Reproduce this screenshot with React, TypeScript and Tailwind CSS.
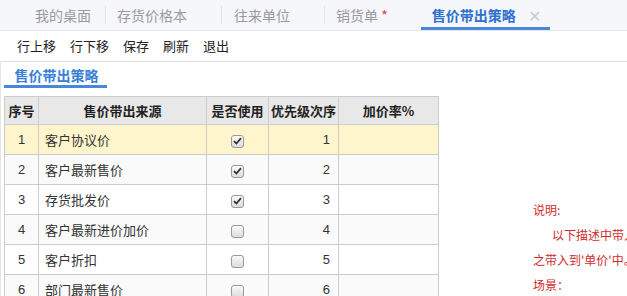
import React from "react";

const rows = [
  { n: 1, name: "客户协议价", used: true, pri: 1 },
  { n: 2, name: "客户最新售价", used: true, pri: 2 },
  { n: 3, name: "存货批发价", used: true, pri: 3 },
  { n: 4, name: "客户最新进价加价", used: false, pri: 4 },
  { n: 5, name: "客户折扣", used: false, pri: 5 },
  { n: 6, name: "部门最新售价", used: false, pri: 6 },
];

function Box({ checked }: { checked: boolean }) {
  return (
    <span className="inline-flex h-[13px] w-[13px] items-center justify-center rounded-[3px] border border-[#9a9a9a] bg-gradient-to-b from-[#fafafa] to-[#dcdcdc]">
      {checked && (
        <svg width="9" height="8" viewBox="0 0 9 8">
          <path d="M1 4.2 L3.4 6.5 L8 1.2" stroke="#333" strokeWidth="1.8" fill="none" />
        </svg>
      )}
    </span>
  );
}

export default function App() {
  const font = { fontFamily: '"Noto Sans CJK SC", "Noto Sans", sans-serif' };
  const num = { fontFamily: '"Liberation Sans", Arial, sans-serif' };
  return (
    <div className="h-[296px] w-[627px] overflow-hidden bg-white text-[#333]" style={font}>
      <div className="flex h-[31px] items-center border-b border-[#e4e7ec] bg-[#f5f7fa] text-[14px] text-[#9a9a9a]">
        <span className="ml-[35px]">我的桌面</span>
        <span className="ml-[14px] h-[18px] w-px bg-[#e2e4e8]" />
        <span className="ml-[11px]">存货价格本</span>
        <span className="ml-[34px] h-[18px] w-px bg-[#e2e4e8]" />
        <span className="ml-[12px]">往来单位</span>
        <span className="ml-[34px] h-[18px] w-px bg-[#e2e4e8]" />
        <span className="ml-[11px]">
          销货单 <span className="text-[#e04040]">*</span>
        </span>
        <div className="relative ml-[33px] flex h-full w-[129px] items-center">
          <span className="ml-[11px] font-bold text-[#2f6fd0]">售价带出策略</span>
          <span className="ml-[12px] text-[16px] leading-none text-[#c8ccd2]">✕</span>
          <span className="absolute bottom-0 left-0 h-[3px] w-full bg-[#4a87da]" />
        </div>
      </div>
      <div className="flex h-[31px] items-center gap-[14px] border-b border-[#dedede] pl-[17px] text-[13px] text-[#222]">
        <span>行上移</span>
        <span>行下移</span>
        <span>保存</span>
        <span>刷新</span>
        <span>退出</span>
      </div>
      <div className="flex border-l border-[#e6e6e6]">
        <div className="w-[436px] shrink-0 pl-[3px]">
          <div className="mt-[3px] inline-flex h-[23px] w-[103px] items-start justify-center border-b-[3px] border-[#4a87da]">
            <span className="pl-[2px] text-[14px] font-semibold text-[#3a80d8]">售价带出策略</span>
          </div>
          <table className="mt-[8px] w-[434px] table-fixed border-collapse whitespace-nowrap text-[13px]">
            <colgroup>
              <col className="w-[34px]" />
              <col className="w-[168px]" />
              <col className="w-[62px]" />
              <col className="w-[70px]" />
              <col className="w-[100px]" />
            </colgroup>
            <thead>
              <tr className="h-[28px] bg-[#e8e8e8] text-[#222]">
                <th className="border border-[#cccccc] font-bold">序号</th>
                <th className="border border-[#cccccc] font-bold">售价带出来源</th>
                <th className="border border-[#cccccc] font-bold">是否使用</th>
                <th className="border border-[#cccccc] font-bold">优先级次序</th>
                <th className="border border-[#cccccc] font-bold">加价率%</th>
              </tr>
            </thead>
            <tbody>
              {rows.map((r) => (
                <tr key={r.n} className={r.n === 1 ? "h-[30px] bg-[#fff5cc]" : r.n % 2 === 0 ? "h-[30px] bg-[#fafafa]" : "h-[30px] bg-white"}>
                  <td className="border border-[#cccccc] text-center" style={num}>{r.n}</td>
                  <td className="border border-[#cccccc] pl-[6px]">{r.name}</td>
                  <td className="border border-[#cccccc] text-center">
                    <span className="inline-flex align-middle">
                      <Box checked={r.used} />
                    </span>
                  </td>
                  <td className="border border-[#cccccc] pr-[8px] text-right" style={num}>{r.pri}</td>
                  <td className="border border-[#cccccc]"></td>
                </tr>
              ))}
            </tbody>
          </table>
        </div>
        <div className="ml-[96px] mt-[135px] whitespace-nowrap text-[12px] leading-[25px] text-[#d02b2b]">
          <div>说明:</div>
          <div className="pl-[19px]">以下描述中带入价格将</div>
          <div>之带入到'单价'中。</div>
          <div>场景：</div>
        </div>
      </div>
    </div>
  );
}
